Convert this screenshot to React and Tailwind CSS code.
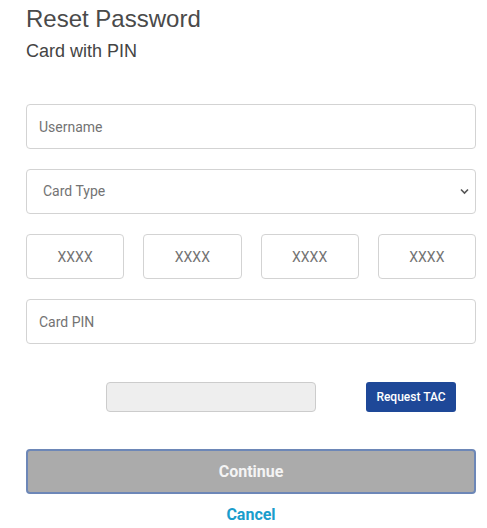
import { useState } from "react";

function App() {
  const [form, setForm] = useState({
    username: "",
    cardType: "",
    c1: "",
    c2: "",
    c3: "",
    c4: "",
    pin: "",
    tac: ""
  });

  const handleChange = (e) => {
    const { name, value } = e.target;
    setForm(prev => ({ ...prev, [name]: value }));
  };

  const inputCls =
    "w-full h-[45px] px-[12px] border border-[#d3d3d3] rounded-[4px] bg-white text-[14px] text-[#495057] placeholder:text-[#737373] outline-none";

  return (
    <div className="min-h-screen bg-white font-['Roboto',sans-serif]">
      <div className="w-[450px] ml-[26px] pt-[5px]">
        <h1 className="font-['Liberation_Sans',Arial,sans-serif] text-[24px] leading-[28px] text-[#4a4a4a]">
          Reset Password
        </h1>
        <h2 className="mt-[7px] font-['Liberation_Sans',Arial,sans-serif] text-[18px] leading-[22px] text-[#444444]">
          Card with PIN
        </h2>

        <form className="mt-[42px] flex flex-col gap-[20px]" onSubmit={(e) => e.preventDefault()}>
          <input
            name="username"
            type="text"
            placeholder="Username"
            className={inputCls}
            value={form.username}
            onChange={handleChange}
          />

          <div className="relative">
            <select
              name="cardType"
              className="w-full h-[45px] pl-[16px] pr-[30px] border border-[#d3d3d3] rounded-[4px] bg-white text-[14px] text-[#737373] outline-none appearance-none"
              value={form.cardType}
              onChange={handleChange}
            >
              <option value="">Card Type</option>
              <option value="debit">Debit Card</option>
              <option value="credit">Credit Card</option>
            </select>
            <svg
              className="absolute right-[7px] top-[19px] pointer-events-none"
              width="9"
              height="7"
              viewBox="0 0 9 7"
            >
              <path d="M1 1.5 L4.5 5 L8 1.5" fill="none" stroke="#555" strokeWidth="1.6" />
            </svg>
          </div>

          <div className="grid grid-cols-4 gap-[19px]">
            {["c1", "c2", "c3", "c4"].map((k) => (
              <input
                key={k}
                name={k}
                type="text"
                maxLength={4}
                placeholder="XXXX"
                className={inputCls + " text-center"}
                value={form[k]}
                onChange={handleChange}
              />
            ))}
          </div>

          <input
            name="pin"
            type="password"
            placeholder="Card PIN"
            className={inputCls}
            value={form.pin}
            onChange={handleChange}
          />

          <div className="mt-[18px] flex items-center">
            <input
              name="tac"
              type="text"
              className="ml-[80px] w-[210px] h-[30px] px-2 border border-[#cccccc] rounded-[4px] bg-[#eeeeee] text-[13px] outline-none"
              value={form.tac}
              onChange={handleChange}
            />
            <button
              type="button"
              className="ml-[50px] w-[90px] h-[30px] rounded-[3px] bg-[#1e4898] text-white text-[12px] font-medium"
            >
              Request TAC
            </button>
          </div>

          <button
            type="submit"
            className="mt-[17px] w-full h-[45px] rounded-[4px] border-2 border-[#6d87b7] bg-[#ababab] text-[#f4f4f4] text-[16px] font-bold"
          >
            Continue
          </button>
        </form>

        <div className="mt-[7px] text-center">
          <a href="#" className="text-[16px] font-bold text-[#1a9dcc] leading-[28px]">
            Cancel
          </a>
        </div>
      </div>
    </div>
  );
}

export default App;
